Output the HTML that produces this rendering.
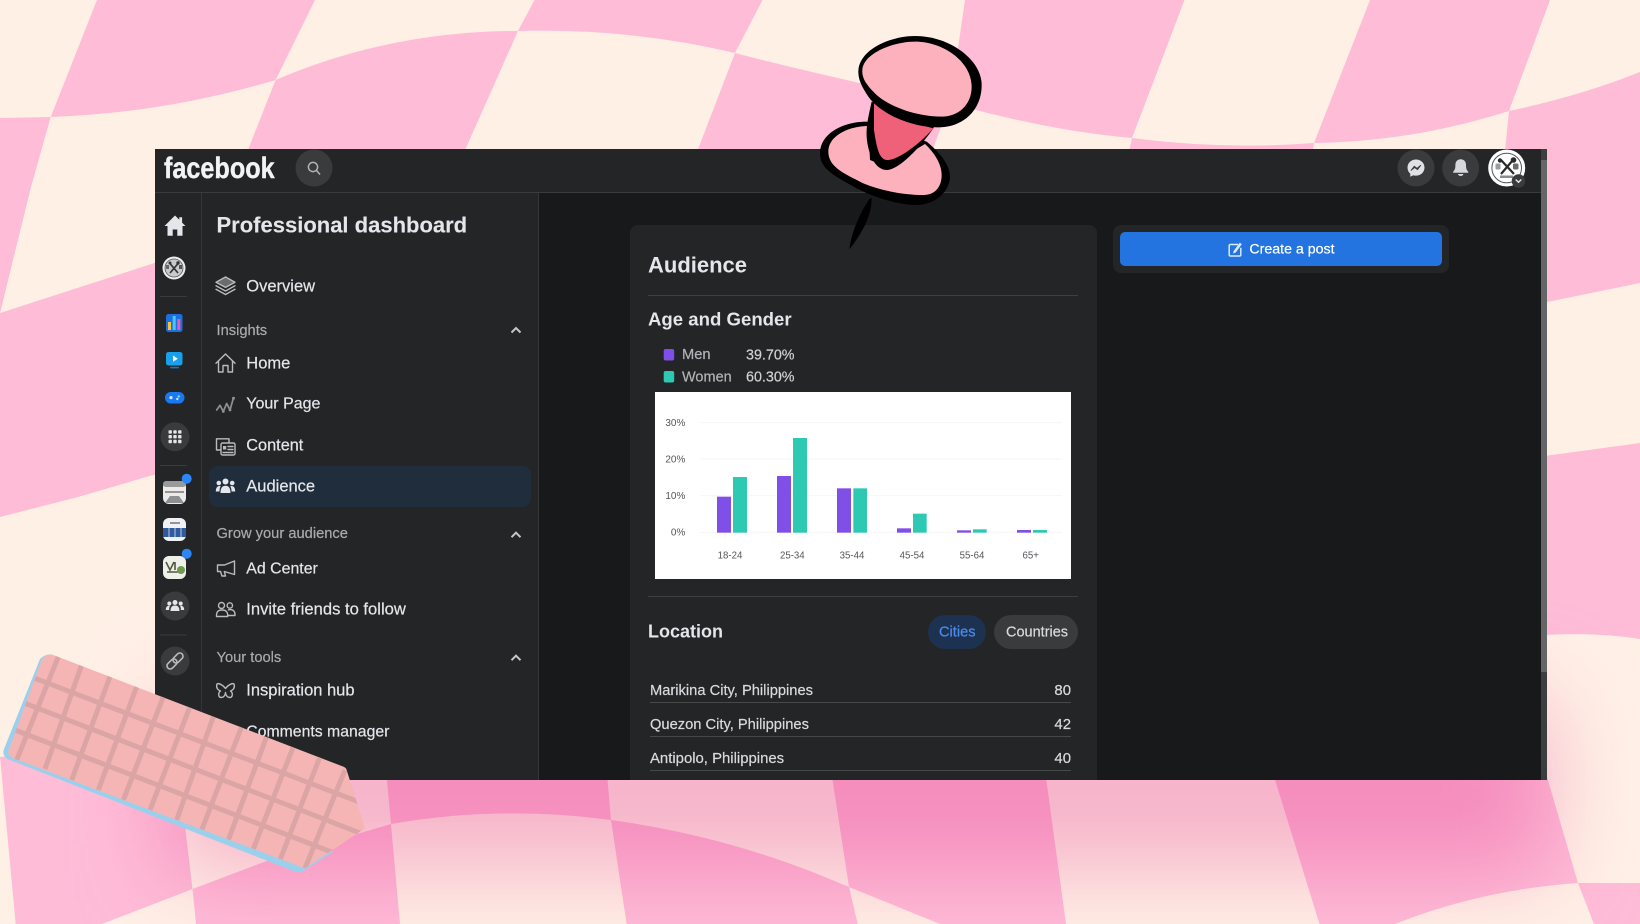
<!DOCTYPE html>
<html lang="en"><head><meta charset="utf-8"><title>Audience</title>
<style>
html,body{margin:0;padding:0;width:1640px;height:924px;overflow:hidden;background:#fff0e6;font-family:"Liberation Sans",sans-serif}
svg.layer{position:absolute;left:0;top:0;width:1640px;height:924px}
.box{position:absolute}
.t{position:absolute;white-space:nowrap;transform:translateY(calc(-50% + .6px));color:#e4e6eb;line-height:1;-webkit-text-stroke:.2px currentColor}
.m{font-size:16.5px}
.s{font-size:14.7px;color:#a8abaf}
.b{font-weight:700;-webkit-text-stroke:0}
.r{font-size:14.9px;color:#d8dadf}
</style></head><body>
<svg class="layer" viewBox="0 0 1640 924" style="z-index:0">
<defs><filter id="bl" filterUnits="userSpaceOnUse" x="0" y="450" width="1640" height="700"><feGaussianBlur stdDeviation="44"/></filter></defs>
<rect width="1640" height="924" fill="#fff0e6"/>
<g fill="#febcd7">
<path d="M97 0H315L275.6 80Q165 113 50.7 117Z"/>
<path d="M534.5 0H762.5L735 53Q630 28 518 31Z"/>
<path d="M965 0H1184.5L1132 138Q1050 131 950 103Z"/>
<path d="M1370 0H1550L1509 111Q1411 142 1314 143Z"/>
<path d="M0 118L50.7 117L31 187L0 313Z"/>
<path d="M275.6 80Q390 31 518 31L465.5 149V170H240Z"/>
<path d="M735 53Q820 75 950 103L925 170H690Z"/>
<path d="M1132 138Q1223 150 1314 143L1310 170H1125Z"/>
<path d="M1509 111Q1580 96 1640 72V283L1547 302H1490Z"/>
<path d="M0 313L170 258V470L78 497L0 517Z"/>
<path d="M1530 458L1640 443V639Q1590 631 1530 636Z"/>
<path d="M0 757L185 740L185.7 832L192.5 889L102 924H15.7Z"/>
<path d="M192.5 889L272 859L391 824L400 924H196Z"/>
<path d="M386 770H606.7L611 820Q500 805 391 824Z"/>
<path d="M611 820Q720 835 820 875L849 887L857.7 924H626.6Z"/>
<path d="M831 770H1045L1066 924H940L849 887Z"/>
<path d="M1272 770H1545L1578 883Q1480 890 1395 924H1319.5Z"/>
<path d="M1578 883H1640V924H1594Z"/>
</g>
<rect x="170" y="700" width="1378" height="172" fill="#f6bfe0" filter="url(#bl)" style="mix-blend-mode:multiply"/>
</svg>

<div class="box" style="left:155px;top:149px;width:1392px;height:631px;background:#18191a;z-index:1"></div>
<div class="box" style="left:155px;top:149px;width:1386px;height:43px;background:#242526;border-bottom:1.5px solid #3a3b3c;z-index:1"></div>
<div class="box" style="left:155px;top:193px;width:46px;height:587px;background:#242526;border-right:1px solid #343536;z-index:1"></div>
<div class="box" style="left:202px;top:193px;width:336px;height:587px;background:#242526;border-right:1px solid #343536;z-index:1"></div>
<div class="box" style="left:1541px;top:149px;width:6px;height:631px;background:#3d3e3f;z-index:1"></div>
<div class="box" style="left:1541px;top:160px;width:6px;height:512px;background:#646566;z-index:1"></div>
<div class="box" style="left:209px;top:466px;width:322px;height:41px;background:#1f2d3c;border-radius:8px;z-index:1"></div>
<div class="box" style="left:630px;top:225px;width:467px;height:555px;background:#242526;border-radius:8px 8px 0 0;z-index:1"></div>
<div class="box" style="left:1113px;top:225px;width:336px;height:48px;background:#242526;border-radius:8px;z-index:1"></div>
<div class="box" style="left:1120px;top:232px;width:322px;height:34px;background:#2374e1;border-radius:5px;z-index:1"></div>
<div class="box" style="left:648px;top:295px;width:430px;height:1px;background:#3e3f40;z-index:1"></div>
<div class="box" style="left:648px;top:596px;width:430px;height:1px;background:#3e3f40;z-index:1"></div>
<div class="box" style="left:655px;top:392px;width:416px;height:187px;background:#fff;z-index:1"></div>
<div class="box" style="left:928px;top:615px;width:58px;height:34px;border-radius:17px;background:#1d3150;z-index:1"></div>
<div class="box" style="left:994px;top:615px;width:84px;height:34px;border-radius:17px;background:#3a3b3c;z-index:1"></div>
<div class="box" style="left:650px;top:701.5px;width:421px;height:1px;background:#47484a;z-index:1"></div>
<div class="box" style="left:650px;top:736px;width:421px;height:1px;background:#47484a;z-index:1"></div>
<div class="box" style="left:650px;top:769.5px;width:421px;height:1px;background:#47484a;z-index:1"></div>

<div style="position:relative;z-index:2">
<div class="t b" style="left:164px;top:169px;font-size:30px;color:#f2f3f5;-webkit-text-stroke:.4px #f2f3f5;transform:translateY(-50%) scaleX(.84);transform-origin:left center">facebook</div>
<div class="t b" style="left:216.5px;top:225.2px;font-size:22px;-webkit-text-stroke:.1px #e4e6eb">Professional dashboard</div>
<div class="t m" style="left:246.3px;top:285.7px">Overview</div>
<div class="t s" style="left:216.5px;top:330.6px">Insights</div>
<div class="t m" style="left:246.3px;top:363.2px">Home</div>
<div class="t m" style="left:246.3px;top:404.4px;font-size:16px">Your Page</div>
<div class="t m" style="left:246.3px;top:445px;font-size:16.3px">Content</div>
<div class="t m" style="left:246.3px;top:485.7px">Audience</div>
<div class="t s" style="left:216.5px;top:534.4px">Grow your audience</div>
<div class="t m" style="left:246.3px;top:569px;font-size:15.9px">Ad Center</div>
<div class="t m" style="left:246.3px;top:608.6px;font-size:16.6px">Invite friends to follow</div>
<div class="t s" style="left:216.5px;top:657.7px">Your tools</div>
<div class="t m" style="left:246.3px;top:690px">Inspiration hub</div>
<div class="t m" style="left:246.3px;top:731.6px;font-size:15.8px">Comments manager</div>

<div class="t b" style="left:648px;top:265.4px;font-size:22px">Audience</div>
<div class="t b" style="left:648px;top:319.2px;font-size:18.6px">Age and Gender</div>
<div class="t" style="left:682px;top:354.7px;font-size:14.7px;color:#b0b3b8">Men</div>
<div class="t" style="left:682px;top:376.7px;font-size:14.5px;color:#b0b3b8">Women</div>
<div class="t" style="left:746px;top:354.7px;font-size:14.3px;color:#cfd1d5">39.70%</div>
<div class="t" style="left:746px;top:376.7px;font-size:14.3px;color:#cfd1d5">60.30%</div>
<div class="t b" style="left:648px;top:631.4px;font-size:18px">Location</div>
<div class="t r" style="left:939px;top:631.7px;font-size:14.6px;color:#4a8df0">Cities</div>
<div class="t r" style="left:1006px;top:631.7px;font-size:14.5px">Countries</div>
<div class="t r" style="left:650px;top:691px;font-size:14.7px">Marikina City, Philippines</div>
<div class="t r" style="left:650px;top:725.2px;font-size:14.7px">Quezon City, Philippines</div>
<div class="t r" style="left:650px;top:758.8px">Antipolo, Philippines</div>
<div class="t r" style="right:569px;top:691px">80</div>
<div class="t r" style="right:569px;top:725px">42</div>
<div class="t r" style="right:569px;top:758.8px">40</div>
<div class="t" style="left:1249.4px;top:248.7px;font-size:14.2px;color:#fff">Create a post</div>
</div>

<svg class="layer" viewBox="0 0 1640 924" style="z-index:3">
<!-- legend -->
<rect x="663.7" y="349" width="10.5" height="11.5" rx="2" fill="#7f4fe8"/>
<rect x="663.7" y="371" width="10.5" height="11.5" rx="2" fill="#2dc9b2"/>
<!-- chart -->
<g transform="translate(640 380) scale(.33333)">
<g stroke="#f6f6f6" stroke-width="3"><path d="M180 128H1265M180 237H1265M180 347H1265M180 457H1265"/></g>
<g fill="#7f4fe8">
<rect x="231" y="350" width="42" height="108"/><rect x="411" y="288" width="42" height="170"/><rect x="591" y="325" width="42" height="133"/><rect x="771" y="445" width="42" height="13"/><rect x="951" y="451" width="42" height="7"/><rect x="1131" y="450" width="42" height="8"/>
</g>
<g fill="#2dc9b2">
<rect x="279" y="291" width="42" height="167"/><rect x="459" y="174" width="42" height="284"/><rect x="640" y="325" width="41" height="133"/><rect x="819" y="401" width="41" height="57"/><rect x="999" y="448" width="41" height="10"/><rect x="1179" y="450" width="42" height="8"/>
</g>
<g font-family="Liberation Sans" font-size="30" fill="#55565a" text-anchor="end">
<text x="136" y="138">30%</text><text x="136" y="247">20%</text><text x="136" y="357">10%</text><text x="136" y="467">0%</text>
</g>
<g font-family="Liberation Sans" font-size="29" fill="#55565a" text-anchor="middle">
<text x="270" y="535">18-24</text><text x="457" y="535">25-34</text><text x="636" y="535">35-44</text><text x="816" y="535">45-54</text><text x="996" y="535">55-64</text><text x="1172" y="535">65+</text>
</g>
</g>

<!-- header icons -->
<circle cx="314" cy="168" r="18.5" fill="#3a3b3c"/>
<g fill="none" stroke="#b0b3b8" stroke-width="1.5"><circle cx="313" cy="167" r="4.6"/><path d="M316.5 170.5L320 174.5"/></g>
<circle cx="1416" cy="168" r="18.5" fill="#3a3b3c"/>
<path d="M1416 159.5c-4.9 0-8.5 3.5-8.5 8.1 0 2.5 1 4.6 2.8 6v3.2l3-1.6c.9.3 1.8.4 2.7.4 4.9 0 8.5-3.5 8.5-8s-3.6-8.1-8.5-8.1z" fill="#dfe1e5"/>
<path d="M1410.8 170.6l3.5-4.4 2.7 2.1 3.9-3.2-3.4 4.6-2.8-2.1z" fill="#3a3b3c" stroke="#3a3b3c" stroke-width=".8"/>
<circle cx="1460.7" cy="168" r="18.5" fill="#3a3b3c"/>
<path d="M1460.7 159.3c-3.4 0-5.3 2.6-5.3 5.5 0 3.4-.4 5-2.2 6.8-.4.5 0 1.1.5 1.1h14c.5 0 .9-.6.5-1.1-1.8-1.8-2.2-3.4-2.2-6.8 0-2.9-1.9-5.5-5.3-5.5z" fill="#d5d7db"/>
<path d="M1458 174h5.4a2.7 2 0 0 1-5.4 0z" fill="#d5d7db"/>
<circle cx="1506.7" cy="168" r="18.5" fill="#fff"/>
<circle cx="1506.7" cy="168" r="14.8" fill="none" stroke="#55565a" stroke-width="1"/>
<g stroke="#2a2a2b" stroke-width="2.2" fill="none"><path d="M1501 160L1514 174M1513 160L1501 174"/></g>
<circle cx="1513.5" cy="160" r="2.8" fill="#2a2a2b"/><circle cx="1500" cy="160.5" r="2.2" fill="#2a2a2b"/>
<rect x="1495.5" y="163.5" width="5" height="6" rx="1.5" fill="#9a9b9d"/><rect x="1513" y="163.5" width="5.5" height="6" rx="1.5" fill="#6b6c6e"/>
<rect x="1500" y="175.5" width="13" height="2.5" fill="#8a8b8d"/>
<circle cx="1518.5" cy="181" r="6.8" fill="#3a3b3c"/>
<path d="M1515.7 179.5l2.8 2.8 2.8-2.8" fill="none" stroke="#e4e6eb" stroke-width="1.4"/>

<!-- create post icon -->
<g fill="none" stroke="#dbe9fb" stroke-width="1.5"><path d="M1238 244.5h-7.5a1.3 1.3 0 0 0-1.3 1.3v8.9a1.3 1.3 0 0 0 1.3 1.3h9a1.3 1.3 0 0 0 1.3-1.3v-7"/><path d="M1234 251l5.8-8 1.6 1.2-5.8 8-2.2.8z" fill="#dbe9fb" stroke-width=".6"/></g>

<!-- chevrons -->
<g fill="none" stroke="#c4c6ca" stroke-width="2"><path d="M511.5 332.5l4.5-4.5 4.5 4.5M511.5 537.2l4.5-4.5 4.5 4.5M511.5 660.2l4.5-4.5 4.5 4.5"/></g>

<!-- rail -->
<path d="M175 215.5L164.5 226h3v9.8h5.2v-6.3h4.6v6.3h5.2V226h3l-3.4-3.4v-5.4h-2.8v2.6z" fill="#e4e6eb"/>
<circle cx="174" cy="268" r="11.5" fill="#eceded"/><circle cx="174" cy="268" r="9" fill="#c9cacb" stroke="#55565a" stroke-width=".8"/>
<g stroke="#333" stroke-width="1.7"><path d="M169.5 263L178 273M178.5 263L170 273"/></g><circle cx="178" cy="263" r="1.7" fill="#333"/><circle cx="170" cy="263" r="1.5" fill="#333"/><rect x="166" y="265" width="3" height="4" fill="#666"/><rect x="179" y="265" width="3" height="4" fill="#555"/>
<g stroke="#3a3b3c" stroke-width="1"><path d="M160 296.5H187M160 465.5H187M160 635H187"/></g>
<rect x="166" y="314" width="16.5" height="18" rx="2.5" fill="#1c6fe0"/>
<rect x="168" y="322" width="3" height="8" fill="#f4c23c"/><rect x="172.7" y="316" width="3" height="14" fill="#49c6f0"/><rect x="177.3" y="319" width="3" height="11" fill="#ee5bb2"/>
<rect x="166" y="352" width="16.5" height="13.5" rx="2.5" fill="#19a0e8"/><path d="M173 355.5l4.8 3.2-4.8 3.2z" fill="#fff"/><rect x="170" y="366.8" width="9" height="1.6" rx=".8" fill="#1774c6"/>
<rect x="165" y="392" width="19.5" height="11.5" rx="5.7" fill="#1a78f0"/><circle cx="171" cy="397.6" r="1.6" fill="#cfe4ff"/><circle cx="178.7" cy="396.5" r="1.2" fill="#7fe0a0"/><circle cx="177.3" cy="399" r="1.2" fill="#cfe4ff"/>
<circle cx="175" cy="436.7" r="14.5" fill="#3a3b3c"/>
<g fill="#e4e6eb"><rect x="168.5" y="430.2" width="3.4" height="3.4" rx=".8"/><rect x="173.3" y="430.2" width="3.4" height="3.4" rx=".8"/><rect x="178.1" y="430.2" width="3.4" height="3.4" rx=".8"/><rect x="168.5" y="435" width="3.4" height="3.4" rx=".8"/><rect x="173.3" y="435" width="3.4" height="3.4" rx=".8"/><rect x="178.1" y="435" width="3.4" height="3.4" rx=".8"/><rect x="168.5" y="439.8" width="3.4" height="3.4" rx=".8"/><rect x="173.3" y="439.8" width="3.4" height="3.4" rx=".8"/><rect x="178.1" y="439.8" width="3.4" height="3.4" rx=".8"/></g>
<!-- pages -->
<rect x="163" y="481" width="23" height="23" rx="6" fill="#ecebe9"/><rect x="163" y="481" width="23" height="6" rx="3" fill="#9a9a9c"/><path d="M165 492h19" stroke="#777" stroke-width="1.5"/><path d="M165 503l5-7h9l5 7z" fill="#8d8f92"/>
<rect x="163" y="518" width="23" height="23" rx="6" fill="#eef1f5"/><rect x="163" y="528" width="23" height="9" fill="#2f5a9d"/><path d="M170 523h10" stroke="#8a6a70" stroke-width="1.5"/><path d="M169 528v9M175 528v9M181 528v9" stroke="#c9d5e6" stroke-width=".9"/>
<rect x="163" y="556" width="23" height="23" rx="6" fill="#eff0ea"/><path d="M166 562l4 8 4-8M175 562v8M167 572h12" stroke="#4d5a3a" stroke-width="1.6" fill="none"/><circle cx="181" cy="570" r="4" fill="#6f9a4f"/>
<circle cx="186.7" cy="478.7" r="5" fill="#2d86f5"/><circle cx="186.7" cy="553.7" r="5" fill="#2d86f5"/>
<circle cx="175" cy="606" r="14.5" fill="#3a3b3c"/>
<g fill="#e4e6eb"><circle cx="175" cy="602.5" r="2.5"/><circle cx="169.3" cy="603.5" r="2"/><circle cx="180.7" cy="603.5" r="2"/><path d="M170.5 611c0-4 1.8-5.5 4.5-5.5s4.5 1.5 4.5 5.5zM165.8 610c0-3 1.3-4.3 3.2-4.3.8 0 1 .2 1 .2-.6 1-.9 2.3-.9 4.1zM184.2 610c0-3-1.3-4.3-3.2-4.3-.8 0-1 .2-1 .2.6 1 .9 2.3.9 4.1z"/></g>
<circle cx="175" cy="661" r="14.5" fill="#3a3b3c"/>
<g fill="none" stroke="#b8babe" stroke-width="1.6" transform="rotate(-45 175 661)"><rect x="165" y="657.8" width="11.5" height="6.4" rx="3.2"/><rect x="173.5" y="657.8" width="11.5" height="6.4" rx="3.2"/></g>

<!-- sidebar icons -->
<g fill="none" stroke="#b8bbbf" stroke-width="1.4" stroke-linejoin="round" stroke-linecap="round">
<path d="M225.5 277L235 282.2L225.5 287.4L216 282.2Z" fill="#6a6c70"/><path d="M216 285.8L225.5 291L235 285.8M216 289.3L225.5 294.5L235 289.3"/>
<path d="M216 363.3L225.5 354L235 363.3M218.5 361V372H223V365.5H228V372H232.5V361"/>
<path d="M216.7 410L220 405.3L223.3 411.5L226.7 403.5L230 410L233.3 398.5" stroke="#8d9094" stroke-width="1.7"/><circle cx="233.5" cy="398.3" r="1.5" fill="#8d9094" stroke="none"/><circle cx="223.3" cy="411.5" r="1.4" fill="#8d9094" stroke="none"/><circle cx="230" cy="410" r="1.4" fill="#8d9094" stroke="none"/>
<path d="M229 443V438.8H216.5V450H220.5"/><rect x="221" y="443" width="14" height="12" rx="1.5" fill="#242526"/><path d="M228 446.5H233M228 449.5H233M223 452.5H233"/><rect x="223" y="446" width="3.2" height="3.5" fill="#b8bbbf" stroke="none"/>
<path d="M234.5 561L224.5 565H217.5V571.5H220.5L222 576H225.5L224.3 571.5L234.5 574.5Z"/>
<circle cx="221.5" cy="605.5" r="3"/><circle cx="229.8" cy="605.5" r="2.7"/><path d="M216.5 616.5C216.2 611.5 218.5 610 222 610C225.8 610 228 611.7 227.7 616.5Z"/><path d="M228.5 609.8C232.5 608.8 235.3 611 235 615.5H228.5"/>
<path d="M225.5 688.5C222.5 684.5 217.5 682.3 216.8 684.5C216 688 218 690.3 220.5 691C218 692.5 218 697.5 221.3 697.5C224 697.5 225.5 694.5 225.5 692.5C225.5 694.5 227 697.5 229.7 697.5C233 697.5 233 692.5 230.5 691C233 690.3 235 688 234.2 684.5C233.5 682.3 228.5 684.5 225.5 688.5Z"/>
</g>
<g fill="#e4e6eb"><circle cx="225.5" cy="481.5" r="3"/><circle cx="218.8" cy="483" r="2.3"/><circle cx="232.2" cy="483" r="2.3"/><path d="M220.5 493c0-5.500 2-7.300 5-7.300s5 1.800 5 7.300zM215.800 491.500c0-3.700 1.500-5.500 3.700-5.500 1 0 1.200.2 1.200.2-.8 1.300-1.200 3-1.200 5.300zM235.200 491.500c0-3.700-1.500-5.500-3.700-5.500-1 0-1.200.2-1.200.2.8 1.300 1.200 3 1.200 5.300z"/></g>

<!-- eraser -->
<g transform="translate(0 645) scale(.33333)">
<defs><clipPath id="ec"><path d="M155 28L1030 365Q1038 368 1040 375L1095 550L915 670L40 340Q22 330 25 318L125 45Q135 28 155 28Z"/></clipPath></defs>
<path d="M150 28Q130 30 120 42L12 312Q5 330 22 342L885 680Q900 686 915 675L1000 620L300 100Z" fill="#9bd0ec"/>
<path d="M155 28L1030 365Q1038 368 1040 375L1095 550L915 670L40 340Q22 330 25 318L125 45Q135 28 155 28Z" fill="#f5b5b5"/>
<g clip-path="url(#ec)" stroke="#dba5a6" stroke-width="15" fill="none">
<path d="M175 35L50 345M245 60L135 372M330 95L215 405M410 125L295 435M490 155L370 465M570 185L450 495M640 215L530 525M725 245L605 555M800 275L685 585M880 305L760 612M960 335L840 645M1035 375L915 670"/>
<path d="M105 100L1075 470M75 175L1090 568M45 255L1005 625"/>
</g>
</g>

<!-- pushpin -->
<g transform="translate(800 20) scale(.33333)">
<path d="M210 535C185 570 155 630 148 688C185 640 215 590 215 535Z" fill="#000"/>
<path d="M200 305C130 305 60 340 60 400C60 450 110 470 170 505C230 535 300 555 350 555C410 555 450 510 450 470C450 430 410 390 380 365L200 305Z" fill="#000"/>
<path d="M205 318C150 318 85 345 85 395C85 440 130 460 190 490C250 515 320 525 370 525C410 525 425 495 425 465C425 430 400 395 375 372L260 440L210 420Z" fill="#fdb1bd"/>
<path d="M215 245C205 290 198 320 200 350C203 400 225 450 260 450C300 450 370 370 402 322Z" fill="#000"/>
<path d="M222 250L300 298L400 325C370 360 300 420 262 420C238 420 230 385 222 330Z" fill="#ef6079"/>
<path d="M175 155C175 90 270 48 345 48C450 48 545 120 545 195C545 270 490 322 415 322C330 322 240 280 205 230C185 200 175 180 175 155Z" fill="#000"/>
<path d="M187 150C190 100 280 65 345 65C430 65 515 125 515 200C515 255 475 290 425 290C350 290 265 260 225 220C200 195 185 175 187 150Z" fill="#fdb1bd"/>
</g>
</svg>
</body></html>
